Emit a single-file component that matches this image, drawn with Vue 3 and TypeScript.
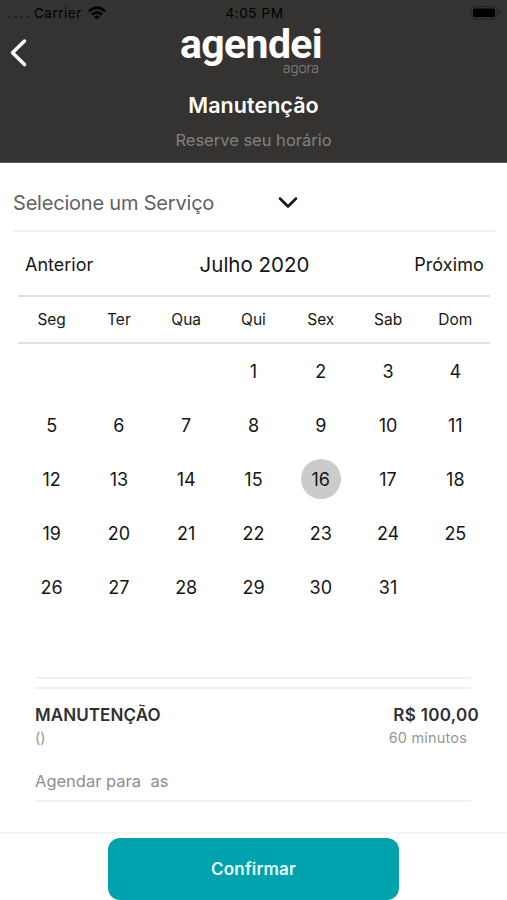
<script setup lang="ts">
import { ref } from 'vue'

const weekdays: string[] = ['Seg', 'Ter', 'Qua', 'Qui', 'Sex', 'Sab', 'Dom']
const leadingBlanks = 3
const daysInMonth = 31
const selected = ref<number>(16)
</script>

<template>
  <main class="screen">
    <header class="header">
      <div class="status">
        <div class="carrier">
          <span class="dots"><i v-for="n in 4" :key="n"></i></span>
          <span class="carrier-name">Carrier</span>
          <svg class="wifi" viewBox="0 0 18 14" width="18" height="14" fill="none" stroke="#000" stroke-width="2.5">
            <path d="M1 5.2Q9-2 17 5.2M4 8.6Q9 4.2 14 8.6" />
            <path d="M6.2 10.8Q9 8.4 11.8 10.8L9 13.6Z" fill="#000" stroke="none" />
          </svg>
        </div>
        <span class="time">4:05 PM</span>
        <svg class="battery" viewBox="0 0 32 16" width="32" height="16">
          <rect x="1" y="1.5" width="26" height="12.5" rx="4" fill="none" stroke="#242322" />
          <rect x="3" y="3.5" width="22" height="8.5" rx="1.5" fill="#000" />
          <path d="M29 6v4q2-.5 2-2t-2-2" fill="#242322" />
        </svg>
      </div>
      <div class="brand-row">
        <button class="back" aria-label="Voltar">
          <svg viewBox="0 0 20 30" width="20" height="30" fill="none" stroke="#fff" stroke-width="3.5" stroke-linecap="round" stroke-linejoin="round">
            <path d="M16.5 3 4.5 14.8 16.5 26.6" />
          </svg>
        </button>
        <div class="brand">
          <span class="brand-main">agendei</span>
          <span class="brand-sub">agora</span>
        </div>
      </div>
      <h1>Manutenção</h1>
      <p class="subtitle">Reserve seu horário</p>
    </header>

    <div class="select">
      <span class="select-label">Selecione um Serviço</span>
      <svg viewBox="0 0 20 14" width="20" height="14" fill="none" stroke="#111" stroke-width="2.5" stroke-linecap="round" stroke-linejoin="round">
        <path d="M2 2.5 10 10.5 18 2.5" />
      </svg>
    </div>

    <section class="calendar">
      <nav class="month">
        <span class="prev">Anterior</span>
        <span class="current">Julho 2020</span>
        <span class="next">Próximo</span>
      </nav>
      <div class="week">
        <span v-for="d in weekdays" :key="d">{{ d }}</span>
      </div>
      <div class="days">
        <span v-for="b in leadingBlanks" :key="'b' + b"></span>
        <button v-for="day in daysInMonth" :key="day" class="day" :class="{ selected: day === selected }" @click="selected = day">
          <span>{{ day }}</span>
        </button>
      </div>
    </section>

    <section class="summary">
      <div class="gap-bar"></div>
      <div class="line">
        <strong class="service">MANUTENÇÃO</strong>
        <strong class="price">R$ 100,00</strong>
      </div>
      <div class="line detail">
        <span class="parens">()</span>
        <span class="duration">60 minutos</span>
      </div>
      <p class="when">Agendar para&nbsp; as</p>
    </section>

    <footer class="footer">
      <button class="confirm">Confirmar</button>
    </footer>
  </main>
</template>

<style>
body {
  margin: 0;
  background: #fff;
}
</style>

<style scoped>
.screen {
  display: flex;
  flex-direction: column;
  width: 507px;
  height: 900px;
  overflow: hidden;
  background: #fff;
  color: #161616;
  font-family: Inter, "Liberation Sans", sans-serif;
}
.screen * {
  box-sizing: border-box;
}
button {
  border: 0;
  padding: 0;
  background: none;
  color: inherit;
  font: inherit;
}
.header {
  height: 163px;
  flex: none;
  border-bottom: 1px solid #5c5a59;
  background: #353331;
  color: #fff;
  text-align: center;
}
.status {
  display: grid;
  grid-template-columns: 1fr auto 1fr;
  align-items: center;
  height: 26px;
  padding: 0 5px 0 8px;
  color: #000;
  font-size: 13.5px;
}
.carrier {
  display: flex;
  align-items: center;
}
.dots {
  display: flex;
  gap: 3px;
  width: 26px;
  padding-top: 8px;
}
.dots i {
  width: 3px;
  height: 2px;
  border-radius: 1px;
  background: #222120;
}
.carrier-name {
  letter-spacing: 0.5px;
}
.wifi {
  margin-left: 6px;
}
.time {
  margin-right: 1px;
  letter-spacing: 0.6px;
}
.battery {
  justify-self: end;
}
.brand-row {
  display: grid;
  grid-template-columns: 180px 142px 1fr;
  height: 54px;
}
.back {
  justify-self: start;
  width: 20px;
  height: 30px;
  margin: 12px 0 0 8px;
}
.brand {
  display: flex;
  flex-direction: column;
  font-family: Roboto, sans-serif;
}
.brand-main {
  height: 36px;
  font-size: 41px;
  font-weight: 700;
  letter-spacing: -0.65px;
  line-height: 37px;
  text-align: left;
  white-space: nowrap;
}
.brand-sub {
  padding-right: 3px;
  color: #8a8988;
  font-size: 14.5px;
  font-weight: 300;
  line-height: 14px;
  text-align: right;
}
h1 {
  margin: 11px 0 0;
  font-size: 21.5px;
  font-weight: 600;
  letter-spacing: 0.05px;
  line-height: 28px;
}
.subtitle {
  margin: 9px 0 0;
  color: #83817f;
  font-size: 16.5px;
  line-height: 24px;
}
.select {
  display: flex;
  align-items: center;
  flex: none;
  width: 482px;
  height: 69px;
  margin-left: 13px;
  padding-bottom: 10px;
  padding-top: 22px;
  border-bottom: 2px solid #f0f0f0;
  color: #626262;
  font-size: 20px;
}
.select-label {
  width: 265px;
  letter-spacing: -0.2px;
  line-height: 24px;
}
.calendar {
  width: 472px;
  margin-left: 18px;
}
.month {
  display: grid;
  grid-template-columns: 1fr auto 1fr;
  align-items: center;
  height: 63px;
  padding: 2px 6px 0 7px;
  font-size: 18px;
}
.current {
  font-size: 20.5px;
}
.next {
  letter-spacing: 0.1px;
  text-align: right;
}
.week {
  display: grid;
  grid-template-columns: repeat(7, 1fr);
  align-items: center;
  height: 49px;
  padding-right: 1px;
  border-top: 2px solid #e1e1e1;
  border-bottom: 2px solid #e1e1e1;
  font-size: 15.5px;
  text-align: center;
}
.days {
  display: grid;
  grid-template-columns: repeat(7, 1fr);
  grid-auto-rows: 54px;
  padding-right: 1px;
}
.day {
  display: grid;
  place-items: center;
  font-size: 18px;
}
.day span {
  width: 40px;
  height: 40px;
  border-radius: 50%;
  line-height: 41px;
  text-align: center;
}
.selected span {
  background: #cbcbcb;
}
.summary {
  width: 444px;
  margin: 63px 0 0 35px;
}
.gap-bar {
  width: 435px;
  height: 12px;
  margin-left: 1px;
  border-top: 2px solid #f1f1f1;
  border-bottom: 2px solid #f1f1f1;
}
.line {
  display: flex;
  align-items: center;
  justify-content: space-between;
  height: 24px;
  margin-top: 14px;
  color: #303030;
  font-size: 17px;
}
.line strong {
  font-weight: 600;
}
.service {
  letter-spacing: 0.08px;
}
.price {
  letter-spacing: 0.3px;
}
.detail {
  height: 20px;
  margin-top: 0;
  padding-right: 12px;
  color: #969696;
  font-size: 14.5px;
}
.duration {
  letter-spacing: 0.18px;
}
.when {
  width: 435px;
  height: 55px;
  margin: 0 0 0 1px;
  border-bottom: 2px solid #f1f1f1;
  color: #8e8e8e;
  font-size: 16.5px;
  line-height: 68px;
  text-indent: -1px;
}
.footer {
  flex: none;
  height: 68px;
  margin-top: auto;
  padding-top: 4px;
  border-top: 2px solid #f5f5f5;
  text-align: center;
}
.confirm {
  width: 291px;
  height: 62px;
  border-radius: 12px;
  background: #00a3ad;
  color: #e9ffff;
  font-size: 17px;
  font-weight: 600;
  letter-spacing: 0.2px;
}
</style>
